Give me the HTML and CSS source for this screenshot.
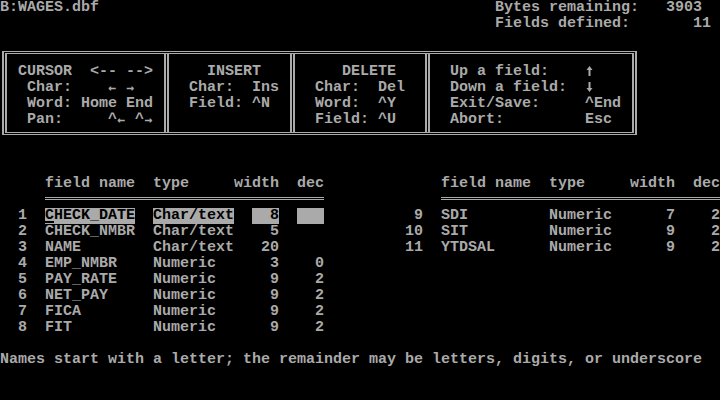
FILE: index.html
```html
<!DOCTYPE html>
<html>
<head>
<meta charset="utf-8">
<link rel="stylesheet" href="styles.css">
</head>
<body>
<div class="screen">
  <header class="status">
    <div class="file">B:WAGES.dbf</div>
    <div class="stats">
      <div class="line">Bytes remaining:   3903</div>
      <div class="line">Fields defined:       11</div>
    </div>
  </header>

  <section class="keys">
    <div class="panel p1">
      <div class="line">CURSOR  &lt;-- --&gt;</div>
      <div class="line"> Char:    <span class="arr">←</span> <span class="arr">→</span></div>
      <div class="line"> Word: Home End</div>
      <div class="line"> Pan:     ^<span class="arr">←</span> ^<span class="arr">→</span></div>
    </div>
    <div class="panel p2">
      <div class="line">  INSERT</div>
      <div class="line">Char:  Ins</div>
      <div class="line">Field: ^N</div>
    </div>
    <div class="panel p3">
      <div class="line">   DELETE</div>
      <div class="line">Char:  Del</div>
      <div class="line">Word:  ^Y</div>
      <div class="line">Field: ^U</div>
    </div>
    <div class="panel p4">
      <div class="line">Up a field:    <svg class="varr" viewBox="0 0 9 16" width="9" height="16"><polygon points="4.5,2 1.5,6 7.5,6"/><rect x="3.5" y="5" width="2" height="7"/></svg></div>
      <div class="line">Down a field:  <svg class="varr" viewBox="0 0 9 16" width="9" height="16"><rect x="3.5" y="2" width="2" height="7"/><polygon points="1.5,8 7.5,8 4.5,12"/></svg></div>
      <div class="line">Exit/Save:     ^End</div>
      <div class="line">Abort:         Esc</div>
    </div>
  </section>

  <section class="fields">
    <div class="ftable">
      <span></span><span></span><span>field name</span><span>type</span><span class="r">width</span><span></span><span class="r">dec</span>
      <div class="rule"></div>
      <span class="r">1</span><span></span><span><span class="hl name-hl"><span class="cursor">C</span>HECK_DATE</span></span><span class="hl">Char/text</span><span class="r"><span class="hl w-hl">8</span></span><span></span><span class="hl"></span>
      <span class="r">2</span><span></span><span>CHECK_NMBR</span><span>Char/text</span><span class="r">5</span><span></span><span class="r"></span>
      <span class="r">3</span><span></span><span>NAME</span><span>Char/text</span><span class="r">20</span><span></span><span class="r"></span>
      <span class="r">4</span><span></span><span>EMP_NMBR</span><span>Numeric</span><span class="r">3</span><span></span><span class="r">0</span>
      <span class="r">5</span><span></span><span>PAY_RATE</span><span>Numeric</span><span class="r">9</span><span></span><span class="r">2</span>
      <span class="r">6</span><span></span><span>NET_PAY</span><span>Numeric</span><span class="r">9</span><span></span><span class="r">2</span>
      <span class="r">7</span><span></span><span>FICA</span><span>Numeric</span><span class="r">9</span><span></span><span class="r">2</span>
      <span class="r">8</span><span></span><span>FIT</span><span>Numeric</span><span class="r">9</span><span></span><span class="r">2</span>
    </div>
    <div class="ftable">
      <span></span><span></span><span>field name</span><span>type</span><span class="r">width</span><span></span><span class="r">dec</span>
      <div class="rule"></div>
      <span class="r">9</span><span></span><span>SDI</span><span>Numeric</span><span class="r">7</span><span></span><span class="r">2</span>
      <span class="r">10</span><span></span><span>SIT</span><span>Numeric</span><span class="r">9</span><span></span><span class="r">2</span>
      <span class="r">11</span><span></span><span>YTDSAL</span><span>Numeric</span><span class="r">9</span><span></span><span class="r">2</span>
    </div>
  </section>

  <p class="msg">Names start with a letter; the remainder may be letters, digits, or underscore</p>
</div>
</body>
</html>
```

FILE: styles.css
```css
html, body {
  margin: 0;
  padding: 0;
  background: #000;
}

.screen {
  width: 720px;
  height: 400px;
  overflow: hidden;
  background: #000;
  color: #aaaaaa;
  font-family: "Liberation Mono", "DejaVu Sans Mono", monospace;
  font-size: 15px;
  font-weight: bold;
  line-height: 16px;
}

.line {
  height: 16px;
  white-space: pre;
}

.status {
  display: flex;
  height: 32px;
}

.file {
  width: 55ch;
  white-space: pre;
}

.keys {
  display: flex;
  box-sizing: border-box;
  width: 635px;
  height: 84px;
  margin: 19px 0 0 2px;
  border-style: double;
  border-color: #aaaaaa;
  border-width: 3px 5px;
}

.panel {
  box-sizing: border-box;
  padding: 10px 0 4px 20px;
}

.p1 {
  width: 157px;
  padding-left: 11px;
}

.p2 {
  width: 126px;
  border-left: 5px double #aaaaaa;
}

.p3 {
  width: 135px;
  border-left: 5px double #aaaaaa;
}

.p4 {
  flex: 1;
  border-left: 5px double #aaaaaa;
}

.arr {
  font-family: "DejaVu Sans Mono", monospace;
  font-size: 13px;
  display: inline-block;
  width: 9px;
  height: 16px;
  line-height: 16px;
  vertical-align: top;
  text-align: center;
}

.varr {
  display: inline-block;
  vertical-align: top;
  fill: #aaaaaa;
}

.fields {
  display: flex;
  gap: 9ch;
  margin: 41px 0 0 1ch;
  height: 160px;
}

.ftable {
  display: grid;
  grid-template-columns: 2ch 2ch 12ch 9ch 5ch 2ch 3ch;
  grid-auto-rows: 16px;
  width: 35ch;
}

.ftable > span {
  white-space: pre;
}

.r {
  text-align: right;
}

.rule {
  grid-column: 3 / -1;
  box-sizing: border-box;
  height: 3px;
  margin-top: 5px;
  border-top: 1px solid #aaaaaa;
  border-bottom: 1px solid #aaaaaa;
}

.hl {
  background: #aaaaaa;
  color: #000;
}

.name-hl {
  display: inline-block;
  width: 10ch;
  height: 16px;
  vertical-align: top;
}

.w-hl {
  display: inline-block;
  width: 3ch;
  height: 16px;
  vertical-align: top;
  text-align: right;
}

.cursor {
  display: inline-block;
  width: 1ch;
  height: 16px;
  vertical-align: top;
  background: linear-gradient(to top, transparent 1px, #000 1px, #000 3px, transparent 3px);
}

.msg {
  margin: 16px 0 0 0;
  height: 16px;
  white-space: pre;
}
```
